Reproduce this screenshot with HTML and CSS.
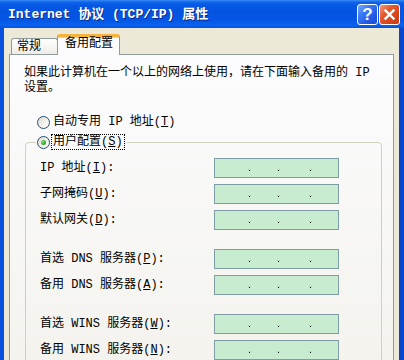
FILE: index.html
```html
<!DOCTYPE html>
<html lang="zh-CN">
<head>
<meta charset="utf-8">
<title>Internet 协议 (TCP/IP) 属性</title>
<link rel="stylesheet" href="styles.css">
</head>
<body>
<div class="window">
  <div class="titlebar">
    <span class="title">Internet 协议 (TCP/IP) 属性</span>
    <div class="tb-buttons">
      <span class="tb-btn help">?</span>
      <span class="tb-btn close"><svg width="19" height="19" viewBox="0 0 19 19"><path d="M5.5 5.5 L13.5 13.5 M13.5 5.5 L5.5 13.5" stroke="#fff" stroke-width="2.4" stroke-linecap="square"/></svg></span>
    </div>
  </div>
  <div class="frame">
    <div class="tabs">
      <div class="tab">常规</div>
      <div class="tab active">备用配置</div>
    </div>
    <div class="panel">
      <p class="desc">如果此计算机在一个以上的网络上使用，请在下面输入备用的 IP<br>设置。</p>
      <div class="radio-row first"><span class="radio"></span><span class="rlabel">自动专用 IP 地址(<u>T</u>)</span></div>
      <fieldset class="group">
        <legend class="radio-row"><span class="radio checked"></span><span class="rlabel focus">用户配置(<u>S</u>)</span></legend>
        <div class="fields">
          <div class="field"><span class="flabel">IP 地址(<u>I</u>):</span><div class="ip"><span class="dot"></span><span class="dot"></span><span class="dot"></span></div></div>
          <div class="field"><span class="flabel">子网掩码(<u>U</u>):</span><div class="ip"><span class="dot"></span><span class="dot"></span><span class="dot"></span></div></div>
          <div class="field"><span class="flabel">默认网关(<u>D</u>):</span><div class="ip"><span class="dot"></span><span class="dot"></span><span class="dot"></span></div></div>
          <div class="field section"><span class="flabel">首选 DNS 服务器(<u>P</u>):</span><div class="ip"><span class="dot"></span><span class="dot"></span><span class="dot"></span></div></div>
          <div class="field"><span class="flabel">备用 DNS 服务器(<u>A</u>):</span><div class="ip"><span class="dot"></span><span class="dot"></span><span class="dot"></span></div></div>
          <div class="field section"><span class="flabel">首选 WINS 服务器(<u>W</u>):</span><div class="ip"><span class="dot"></span><span class="dot"></span><span class="dot"></span></div></div>
          <div class="field"><span class="flabel">备用 WINS 服务器(<u>N</u>):</span><div class="ip"><span class="dot"></span><span class="dot"></span><span class="dot"></span></div></div>
        </div>
      </fieldset>
    </div>
  </div>
</div>
</body>
</html>
```
FILE: styles.css
```css
html, body {
  margin: 0;
  padding: 0;
}
body {
  width: 404px;
  height: 360px;
  overflow: hidden;
  background: #ece9d8;
  font-family: "Liberation Mono", "Noto Sans CJK SC", monospace;
  font-size: 12px;
  color: #000;
}
.window {
  display: flex;
  flex-direction: column;
  height: 360px;
}
.titlebar {
  flex: none;
  height: 28px;
  box-sizing: border-box;
  display: flex;
  align-items: center;
  justify-content: space-between;
  padding: 1px 4px 0 8px;
  background: linear-gradient(to bottom,
    #3d8df6 0px, #1066ea 2px, #0658e4 5px, #0454e0 12px,
    #0456e4 20px, #0a62ee 25px, #0553dc 28px);
}
.title {
  color: #fff;
  font-family: "Liberation Mono", "Noto Sans CJK SC", monospace;
  font-weight: bold;
  font-size: 13px;
  line-height: 16px;
  text-shadow: 1px 1px 0 #0b2a8a;
  white-space: nowrap;
}
.tb-buttons {
  display: flex;
  gap: 1px;
}
.tb-btn {
  width: 21px;
  height: 21px;
  box-sizing: border-box;
  border: 1px solid #fff;
  border-radius: 3px;
  display: flex;
  align-items: center;
  justify-content: center;
}
.help {
  background: linear-gradient(135deg, #78aaff 0%, #3b78f4 35%, #2258e6 70%, #1a4cd6 100%);
  color: #fff;
  font-family: "Liberation Sans", sans-serif;
  font-weight: bold;
  font-size: 17px;
  line-height: 19px;
}
.close {
  background: linear-gradient(135deg, #f49a78 0%, #e6582e 35%, #d8441a 70%, #c33a14 100%);
}
.frame {
  flex: 1;
  display: flex;
  flex-direction: column;
  border-left: 4px solid #0a50dc;
  border-right: 5px solid #0a45d0;
  padding: 6px 5px 0 5px;
  min-height: 0;
}
.tabs {
  flex: none;
  height: 21px;
  display: flex;
  align-items: flex-end;
  padding-left: 2px;
}
.tab {
  box-sizing: border-box;
  height: 17px;
  width: 47px;
  border: 1px solid #919b9c;
  border-bottom: none;
  border-radius: 3px 3px 0 0;
  padding: 1px 0 0 5px;
  line-height: 14px;
  background: linear-gradient(#ffffff, #ecebe5);
  white-space: nowrap;
}
.tab.active {
  position: relative;
  z-index: 1;
  width: 63px;
  height: 21px;
  margin-left: -1px;
  padding: 0 0 0 7px;
  border-top: 3px solid #f6b33c;
  box-shadow: inset 0 1px 0 #ffcf6b;
  background: #fcfcfe;
}
.panel {
  flex: 1;
  margin-top: -1px;
  border: 1px solid #919b9c;
  border-bottom: none;
  background: linear-gradient(#fcfcfe, #f3f2ec);
  padding: 11px 11px 0 14px;
}
.desc {
  margin: 0;
  line-height: 15px;
  white-space: nowrap;
}
.radio-row {
  display: flex;
  align-items: center;
  height: 16px;
}
.radio-row.first {
  margin: 18px 0 0 13px;
}
.radio {
  flex: none;
  width: 13px;
  height: 13px;
  box-sizing: border-box;
  border-radius: 50%;
  border: 1px solid #1c5180;
  background: linear-gradient(135deg, #dcd9ce 0%, #f3f2ec 55%, #ffffff 100%);
  display: flex;
  align-items: center;
  justify-content: center;
}
.radio.checked::after {
  content: "";
  width: 5px;
  height: 5px;
  border-radius: 50%;
  background: radial-gradient(circle at 35% 35%, #7ee07a 0%, #2eb32c 55%, #1a8f1a 100%);
}
.rlabel {
  margin-left: 3px;
  line-height: 14px;
  white-space: nowrap;
}
.rlabel.focus {
  margin-left: 1px;
  border: 1px dotted #000;
  padding: 0 1px;
}
.group {
  margin: 4px 0 0 1px;
  border: 1px solid #d0d0bf;
  border-radius: 4px;
  padding: 8px 0 30px 14px;
  min-width: 0;
}
.group legend {
  margin-left: -4px;
  padding: 0 2px 0 1px;
}
.fields {
  display: flex;
  flex-direction: column;
  gap: 6px;
}
.field {
  display: grid;
  grid-template-columns: 174px 125px;
  align-items: center;
  height: 20px;
}
.field.section {
  margin-top: 13px;
}
.flabel {
  line-height: 14px;
  white-space: nowrap;
}
.ip {
  height: 20px;
  box-sizing: border-box;
  border: 1px solid #7f9da4;
  background: #c8ecd0;
  display: flex;
  align-items: flex-start;
  padding: 11px 0 0 34px;
}
.dot {
  width: 1px;
  height: 1px;
  background: #000;
  box-shadow: -1px -1px 0 #a9cfb2, 1px -1px 0 #a9cfb2;
}
.dot:nth-child(2) {
  margin-left: 28px;
}
.dot:nth-child(3) {
  margin-left: 31px;
}
```
